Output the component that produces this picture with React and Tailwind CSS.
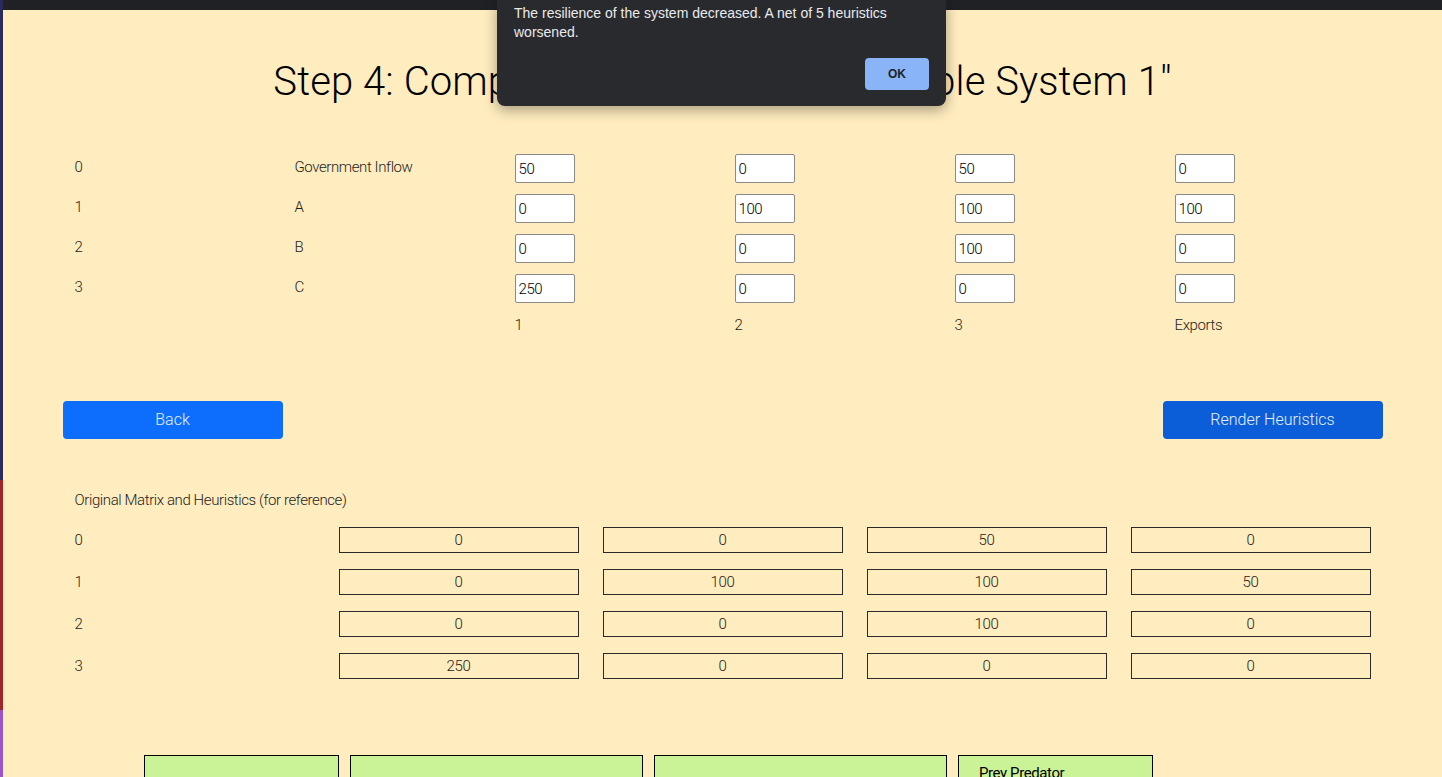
const current = [
  { id: 0, name: "Government Inflow", values: [50, 0, 50, 0] },
  { id: 1, name: "A", values: [0, 100, 100, 100] },
  { id: 2, name: "B", values: [0, 0, 100, 0] },
  { id: 3, name: "C", values: [250, 0, 0, 0] },
];

const original = [
  [0, 0, 50, 0],
  [0, 100, 100, 50],
  [0, 0, 100, 0],
  [250, 0, 0, 0],
];

const columnLabels = ["1", "2", "3", "Exports"];

export default function App() {
  return (
    <div className="relative flex min-h-[777px] w-full overflow-hidden bg-[#ffecbf] font-['Roboto',sans-serif] font-light text-[#1d1d1d]">
      {/* coloured edge strip */}
      <div className="flex w-[3px] shrink-0 flex-col">
        <div className="h-[480px] bg-[#2b2a5c]" />
        <div className="h-[230px] bg-[#a3252b]" />
        <div className="flex-1 bg-[#9b55c9]" />
      </div>

      <div className="flex-1">
        <div className="h-[10px] bg-[#202124]" />

        <h1 className="mt-[50px] text-center text-[40px] leading-[44px] font-light tracking-[0.1px] text-black">
          Step 4: Compare Heuristics for "Example System 1"
        </h1>

        <div className="mx-auto mt-[50px] w-[1320px]">
          {current.map((row) => (
            <div key={row.id} className="grid h-[40px] grid-cols-6">
              <div className="px-3 pt-[2px] text-[15px] tracking-[-0.4px]">{row.id}</div>
              <div className="px-3 pt-[2px] text-[15px] tracking-[-0.4px]">{row.name}</div>
              {row.values.map((v, i) => (
                <div key={i} className="px-3">
                  <input
                    readOnly
                    value={v}
                    className="h-[29px] w-[60px] rounded-[2px] border border-[#8a8a8a] bg-white px-[3px] text-[15px] font-light tracking-[-0.4px] text-black outline-none"
                  />
                </div>
              ))}
            </div>
          ))}
          <div className="grid grid-cols-6 text-[15px] tracking-[-0.4px]">
            <div />
            <div />
            {columnLabels.map((l) => (
              <div key={l} className="px-3">
                {l}
              </div>
            ))}
          </div>

          <div className="mt-[64px] flex justify-between">
            <button className="h-[38px] w-[220px] rounded-[4px] bg-[#0d6efd] text-[16px] font-light text-white/90">
              Back
            </button>
            <button className="h-[38px] w-[220px] rounded-[4px] bg-[#0b5ed7] text-[16px] font-light text-white/90">
              Render Heuristics
            </button>
          </div>

          <p className="mt-[50px] px-3 text-[15px] tracking-[-0.4px]">
            Original Matrix and Heuristics (for reference)
          </p>

          <div className="mt-[16px]">
            {original.map((row, r) => (
              <div key={r} className="grid h-[42px] grid-cols-5">
                <div className="px-3 pt-[2px] text-[15px]">{r}</div>
                {row.map((v, i) => (
                  <div key={i} className="px-3">
                    <div className="flex h-[26px] items-center justify-center border border-[#2a2a2a] text-[15px] tracking-[-0.4px]">
                      {v}
                    </div>
                  </div>
                ))}
              </div>
            ))}
          </div>
        </div>

        <div className="mt-[60px] ml-[141px] flex gap-[11px]">
          <div className="h-[40px] w-[195px] border border-black bg-[#caf296]" />
          <div className="h-[40px] w-[293px] border border-black bg-[#caf296]" />
          <div className="h-[40px] w-[293px] border border-black bg-[#caf296]" />
          <div className="h-[40px] w-[195px] border border-black bg-[#caf296] px-5 pt-[6px] text-[15px] font-normal tracking-[-0.4px] text-black">
            Prey Predator
          </div>
        </div>
      </div>

      {/* alert dialog */}
      <div className="absolute top-0 left-[497px] w-[449px] rounded-b-[8px] bg-[#292a2d] px-[17px] pt-[4px] pb-[16px] font-['Liberation_Sans',sans-serif] shadow-[0_4px_14px_rgba(0,0,0,0.35)]">
        <p className="w-[385px] text-[14px] leading-[19px] font-normal text-[#e8eaed]">
          The resilience of the system decreased. A net of 5 heuristics worsened.
        </p>
        <div className="mt-[16px] flex justify-end">
          <button className="h-[32px] w-[64px] rounded-[4px] bg-[#8ab4f8] text-[12px] font-bold text-[#202124]">
            OK
          </button>
        </div>
      </div>
    </div>
  );
}
